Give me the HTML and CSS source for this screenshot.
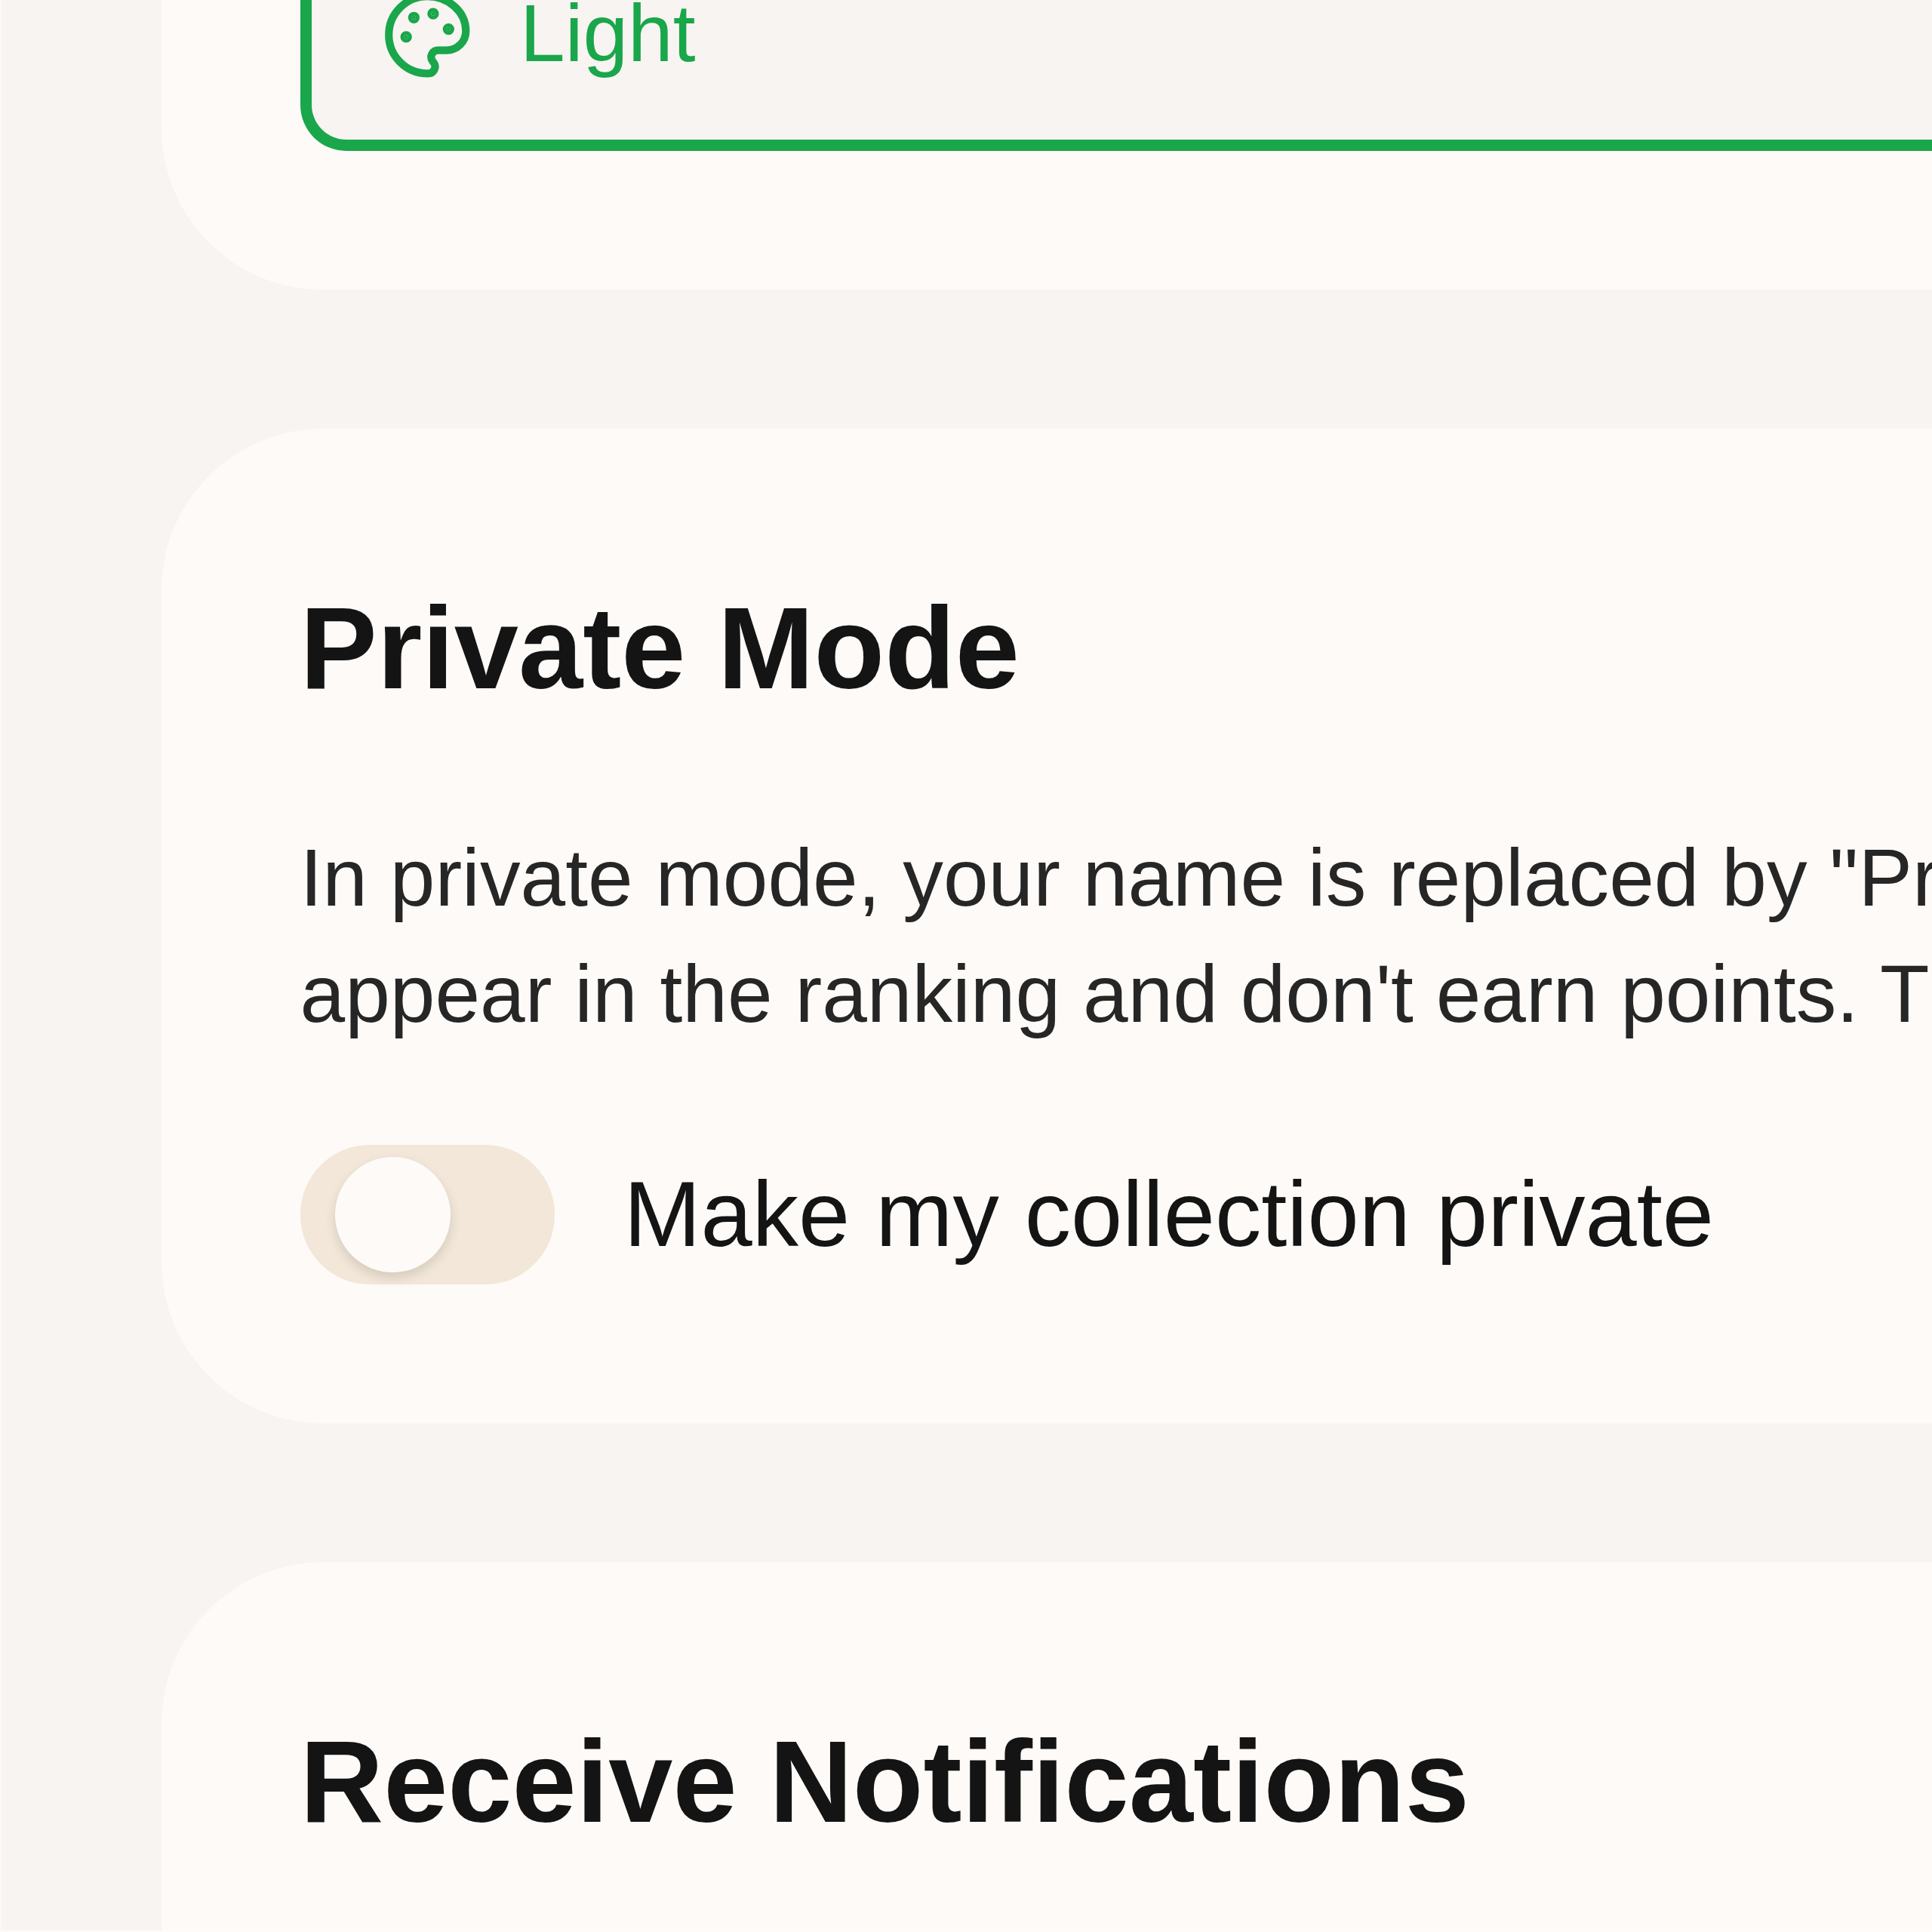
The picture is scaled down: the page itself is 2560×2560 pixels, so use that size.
FILE: index.html
```
<!DOCTYPE html>
<html lang="en">
<head>
  <meta charset="utf-8">
  <title>Settings</title>
  <link rel="stylesheet" href="styles.css">
</head>
<body>
<main class="settings">

  <section class="card theme-card">
    <button class="theme-option">
      <svg class="icon" viewBox="0 0 24 24" fill="none" stroke="currentColor" stroke-width="2" stroke-linecap="round" stroke-linejoin="round">
        <path d="M12 22a1 1 0 0 1 0-20 10 9 0 0 1 10 9 5 5 0 0 1-5 5h-2.25a1.75 1.75 0 0 0-1.4 2.8l.3.4a1.75 1.75 0 0 1-1.4 2.8z"/>
        <circle cx="13.5" cy="6.5" r=".5" fill="currentColor"/>
        <circle cx="17.5" cy="10.5" r=".5" fill="currentColor"/>
        <circle cx="6.5" cy="12.5" r=".5" fill="currentColor"/>
        <circle cx="8.5" cy="7.5" r=".5" fill="currentColor"/>
      </svg>
      <span class="theme-name">Light</span>
    </button>
  </section>

  <section class="card private-card">
    <h2>Private Mode</h2>
    <p>In private mode, your name is replaced by "Pr<br>appear in the ranking and don't earn points. T</p>
    <label class="switch-row">
      <span class="switch"><span class="thumb"></span></span>
      <span class="switch-label">Make my collection private</span>
    </label>
  </section>

  <section class="card notifications-card">
    <h2>Receive Notifications</h2>
  </section>

</main>
</body>
</html>
```
FILE: styles.css
```
* {
  box-sizing: border-box;
}

body {
  margin: 0;
  height: 2560px;
  overflow: hidden;
  border-left: 2px solid #fbf8f5;
  border-bottom: 2px solid #fefcfa;
  background-color: #f7f4f1;
  color: #141414;
  font-family: "Liberation Sans", Arial, sans-serif;
}

.settings {
  display: flex;
  flex-direction: column;
  gap: 184px;
  height: 2558px;
  padding-left: 211.5px;
  overflow: hidden;
}

.card {
  flex: none;
  padding: 184px;
  padding-right: 0;
  background-color: #fefaf7;
  border-radius: 214px 0 0 214px;
}

/* scrolled partly out of view */
.theme-card {
  display: flex;
  align-items: flex-end;
  height: 383.5px;
  padding-top: 0;
  border-top-left-radius: 0;
}

.theme-option {
  display: flex;
  flex: 1;
  align-items: center;
  gap: 62px;
  height: 306px;
  padding: 0 92px;
  border: 15px solid #1aa64b;
  border-right: 0;
  border-radius: 61px 0 0 61px;
  background-color: #f7f4f1;
  color: #1aa64b;
  font-family: inherit;
  font-size: 107.25px;
  line-height: 153px;
}

.theme-name {
  padding-bottom: 5px;
}

.icon {
  width: 122.5px;
  height: 122.5px;
}

h2 {
  margin: 0;
  font-size: 153.2px;
  line-height: 214.5px;
  font-weight: bold;
}

p {
  margin: 120px 0 123px;
  color: #262626;
  font-size: 107.25px;
  line-height: 154px;
  white-space: nowrap;
}

.switch-row {
  display: flex;
  align-items: center;
  gap: 92px;
}

.switch {
  width: 337px;
  height: 184.5px;
  padding: 15.5px 46px;
  border-radius: 92px;
  background-color: #f2e7d8;
}

.thumb {
  display: block;
  width: 153px;
  height: 153px;
  border-radius: 50%;
  background-color: #fefaf7;
  box-shadow: 0 7px 15px rgba(0, 0, 0, 0.12);
}

.switch-label {
  font-size: 122.6px;
  line-height: 184px;
}

.notifications-card {
  flex: 1;
  border-bottom-left-radius: 0;
}
```
